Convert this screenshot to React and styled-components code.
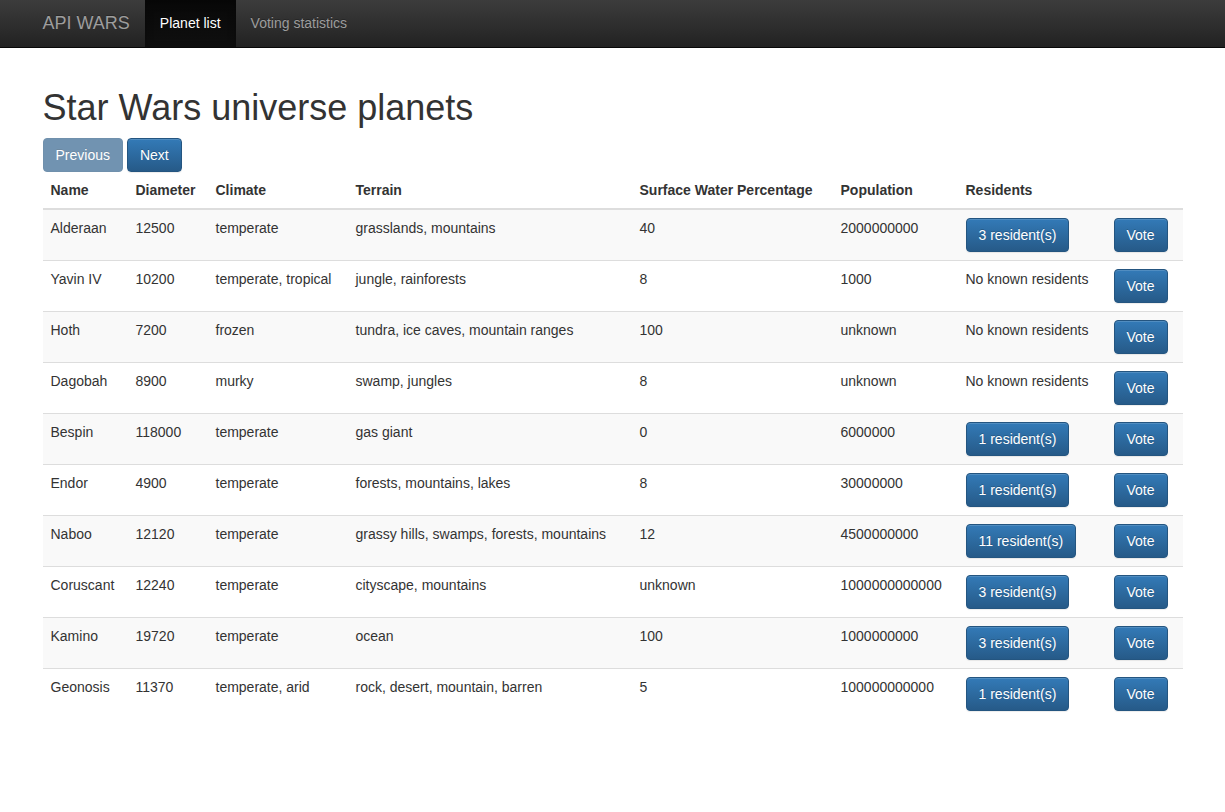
import React from 'react'
import styled, { createGlobalStyle } from 'styled-components'

const GlobalStyle = createGlobalStyle`
    * { box-sizing: border-box; }
    body {
        margin: 0;
        font-family: "Liberation Sans", Arial, sans-serif;
        font-size: 14px;
        line-height: 1.42857;
        color: #333;
        background: #fff;
    }
`

let Navbar = styled.nav`
    height: 48px;
    background: linear-gradient(to bottom, #3c3c3c 0%, #222 100%);
    border-bottom: 1px solid #080808;
`

let NavInner = styled.div`
    width: 1170px;
    margin: 0 auto;
    padding: 0 15px;
    display: flex;
    height: 100%;
`

let Brand = styled.a`
    font-size: 18px;
    line-height: 20px;
    padding: 13px 15px 14px 0;
    color: #9d9d9d;
    text-shadow: 0 -1px 0 rgba(0,0,0,.25);
    text-decoration: none;
`

let NavItem = styled.a`
    padding: 13px 15px 14px;
    line-height: 20px;
    color: ${p => p.active ? '#fff' : '#9d9d9d'};
    text-shadow: 0 -1px 0 rgba(0,0,0,.25);
    text-decoration: none;
    background: ${p => p.active ? 'linear-gradient(to bottom, #080808 0%, #0f0f0f 100%)' : 'none'};
    box-shadow: ${p => p.active ? 'inset 0 3px 9px rgba(0,0,0,.25)' : 'none'};
`

let Container = styled.div`
    width: 1170px;
    margin: 0 auto;
    padding: 20px 15px 0;
`

let Title = styled.h1`
    font-size: 36px;
    font-weight: 500;
    line-height: 1.1;
    margin: 20px 0 10px;
    color: #333;
`

let Pager = styled.div`
    display: flex;
    gap: 4px;
`

let Button = styled.button`
    font-family: inherit;
    font-size: 14px;
    line-height: 20px;
    padding: 6px 12px;
    color: #fff;
    border: 1px solid #245580;
    border-radius: 4px;
    background: linear-gradient(to bottom, #337ab7 0%, #265a88 100%);
    text-shadow: 0 -1px 0 rgba(0,0,0,.2);
    box-shadow: inset 0 1px 0 rgba(255,255,255,.15), 0 1px 1px rgba(0,0,0,.075);
    cursor: pointer;
    &:disabled {
        opacity: .65;
        background: #265a88;
        cursor: not-allowed;
        box-shadow: none;
    }
`

let Table = styled.table`
    width: 100%;
    border-collapse: collapse;
    border-spacing: 0;
    margin-bottom: 20px;
    th {
        text-align: left;
        font-weight: bold;
        padding: 8px;
        line-height: 20px;
        vertical-align: bottom;
        border-bottom: 2px solid #ddd;
    }
    td {
        padding: 8px;
        line-height: 20px;
        vertical-align: top;
        border-top: 1px solid #ddd;
    }
    tbody tr:first-child td { border-top: 0; }
    tbody tr:nth-child(odd) { background: #f9f9f9; }
`

const planets = [
    ['Alderaan', '12500', 'temperate', 'grasslands, mountains', '40', '2000000000', 3],
    ['Yavin IV', '10200', 'temperate, tropical', 'jungle, rainforests', '8', '1000', 0],
    ['Hoth', '7200', 'frozen', 'tundra, ice caves, mountain ranges', '100', 'unknown', 0],
    ['Dagobah', '8900', 'murky', 'swamp, jungles', '8', 'unknown', 0],
    ['Bespin', '118000', 'temperate', 'gas giant', '0', '6000000', 1],
    ['Endor', '4900', 'temperate', 'forests, mountains, lakes', '8', '30000000', 1],
    ['Naboo', '12120', 'temperate', 'grassy hills, swamps, forests, mountains', '12', '4500000000', 11],
    ['Coruscant', '12240', 'temperate', 'cityscape, mountains', 'unknown', '1000000000000', 3],
    ['Kamino', '19720', 'temperate', 'ocean', '100', '1000000000', 3],
    ['Geonosis', '11370', 'temperate, arid', 'rock, desert, mountain, barren', '5', '100000000000', 1],
]

const widths = [85, 80, 140, 284, 201, 125, 148, 77]

export default function App() {
    return (
        <>
            <GlobalStyle />
            <Navbar>
                <NavInner>
                    <Brand href="#">API WARS</Brand>
                    <NavItem href="#" active>Planet list</NavItem>
                    <NavItem href="#">Voting statistics</NavItem>
                </NavInner>
            </Navbar>
            <Container>
                <Title>Star Wars universe planets</Title>
                <Pager>
                    <Button disabled>Previous</Button>
                    <Button>Next</Button>
                </Pager>
                <Table>
                    <colgroup>
                        {widths.map((w, i) => <col key={i} style={{ width: w }} />)}
                    </colgroup>
                    <thead>
                        <tr>
                            <th>Name</th>
                            <th>Diameter</th>
                            <th>Climate</th>
                            <th>Terrain</th>
                            <th>Surface Water Percentage</th>
                            <th>Population</th>
                            <th>Residents</th>
                            <th></th>
                        </tr>
                    </thead>
                    <tbody>
                        {planets.map(p => (
                            <tr key={p[0]}>
                                <td>{p[0]}</td>
                                <td>{p[1]}</td>
                                <td>{p[2]}</td>
                                <td>{p[3]}</td>
                                <td>{p[4]}</td>
                                <td>{p[5]}</td>
                                <td>
                                    {p[6] > 0
                                        ? <Button>{p[6]} resident(s)</Button>
                                        : 'No known residents'}
                                </td>
                                <td><Button>Vote</Button></td>
                            </tr>
                        ))}
                    </tbody>
                </Table>
            </Container>
        </>
    )
}
